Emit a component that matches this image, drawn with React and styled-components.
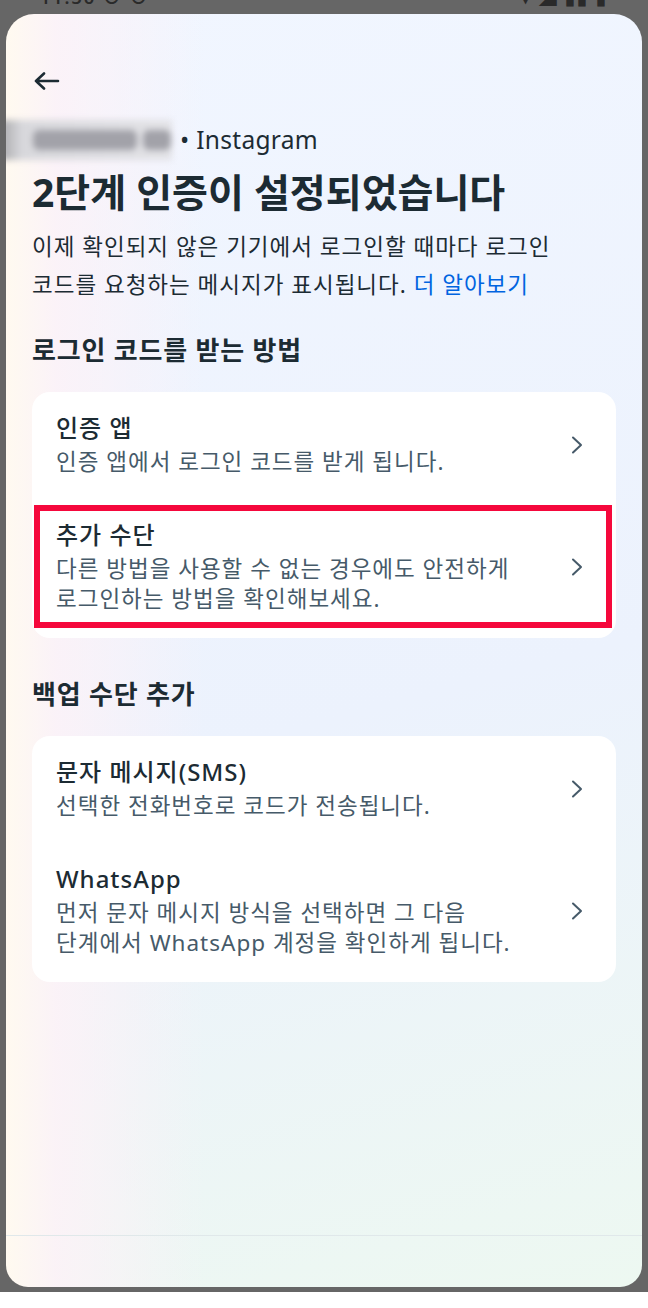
import React from "react";
import styled, { createGlobalStyle } from "styled-components";

const GlobalStyle = createGlobalStyle`
  * {
    box-sizing: border-box;
  }
  body {
    margin: 0;
    background: #666666;
    font-family: "Noto Sans", "Noto Sans CJK KR", sans-serif;
    color: #1c2b33;
  }
`;

const Page = styled.div`
  width: 648px;
  height: 1308px;
  display: flex;
  flex-direction: column;
  background: #666666;
  overflow: hidden;
`;

const StatusBar = styled.div`
  height: 14px;
  flex-shrink: 0;
  display: flex;
  justify-content: space-between;
  padding: 0 40px;
  overflow: hidden;
`;

const StatusText = styled.span`
  margin-top: -14px;
  font-size: 18px;
  line-height: 22px;
  font-weight: 600;
  color: #2a2a2a;
  letter-spacing: 2px;
`;

const Sheet = styled.div`
  height: 1273px;
  margin: 0 6px;
  flex-shrink: 0;
  display: flex;
  flex-direction: column;
  border-radius: 28px 28px 22px 22px;
  overflow: hidden;
  background:
    linear-gradient(90deg, rgba(255, 250, 240, 1) 0px, rgba(253, 242, 247, 0.85) 50px, rgba(240, 244, 255, 0) 200px),
    linear-gradient(165deg, #f1f6ff 0%, #ecf2fd 55%, #edf8f1 100%);
`;

const Content = styled.div`
  flex: 1;
  padding: 58px 26px 0;
`;

const BackButton = styled.button`
  display: block;
  width: 26px;
  height: 18px;
  padding: 0;
  margin-left: 2px;
  border: none;
  background: none;
  color: #1c2b33;
`;

const AccountRow = styled.div`
  display: flex;
  align-items: center;
  height: 40px;
  margin-top: 30px;
`;

const Redaction = styled.span`
  display: flex;
  align-items: center;
  gap: 6px;
  width: 172px;
  height: 40px;
  margin-left: -32px;
  padding-left: 33px;
  background: linear-gradient(90deg, #a9a9ab 0px, #d8d8dc 22px, #e2e2e6 100%);
  filter: blur(3px);
`;

const Blob = styled.span`
  height: 20px;
  width: ${(p) => p.$w}px;
  border-radius: 6px;
  background: #a2a2a9;
`;

const AccountText = styled.span`
  margin-left: 8px;
  font-size: 24.5px;
  line-height: 30px;
  letter-spacing: 0.3px;
  color: #1c2b33;
`;

const Title = styled.h1`
  margin: 8px 0 0;
  font-size: 39px;
  line-height: 48px;
  font-weight: 700;
  color: #1c2b33;
  white-space: nowrap;
`;

const Description = styled.p`
  margin: 12px 0 0;
  font-size: 22.5px;
  line-height: 38px;
  letter-spacing: 1px;
  color: #1c2b33;
  white-space: nowrap;
`;

const Link = styled.a`
  color: #0064e0;
  text-decoration: none;
`;

const Section = styled.section`
  margin-top: ${(p) => p.$top}px;
`;

const SectionTitle = styled.h2`
  margin: 0 0 25px;
  font-size: 26px;
  line-height: 34px;
  font-weight: 700;
  letter-spacing: 0.8px;
  color: #1c2b33;
`;

const Card = styled.div`
  background: #ffffff;
  border-radius: 18px;
  padding-bottom: 2px;
`;

const Item = styled.div`
  position: relative;
  display: flex;
  align-items: center;
  padding: 20px 33px 22px 24px;
`;

const ItemText = styled.div`
  flex: 1;
`;

const ItemTitle = styled.div`
  font-size: 24px;
  line-height: 32px;
  font-weight: 500;
  letter-spacing: 1px;
  color: #1c2b33;
  margin-bottom: 3px;
`;

const ItemSub = styled.div`
  font-size: 22.5px;
  line-height: 30px;
  letter-spacing: 1px;
  color: #465a69;
  white-space: nowrap;
`;

const Chevron = styled.svg`
  width: 12px;
  height: 18px;
  flex-shrink: 0;
  color: #465a69;
`;

const Highlight = styled.div`
  position: absolute;
  top: 6px;
  left: 2px;
  right: 4px;
  bottom: 8px;
  border: 6px solid #f5083c;
  pointer-events: none;
`;

const Footer = styled.div`
  height: 52px;
  flex-shrink: 0;
  border-top: 1px solid #e0e8ea;
`;

const Gap = styled.div`
  height: 5px;
  flex-shrink: 0;
`;

const BottomStrip = styled.div`
  flex: 1;
  background: #ffffff;
`;

const ArrowLeft = () => (
  <svg width="26" height="18" viewBox="0 0 26 18" fill="none">
    <path
      d="M2 9H24M10 1.5L2 9L10 16.5"
      stroke="currentColor"
      strokeWidth="2.6"
      strokeLinecap="round"
      strokeLinejoin="round"
    />
  </svg>
);

const ChevronRight = () => (
  <Chevron viewBox="0 0 12 18" fill="none">
    <path
      d="M2 1.5L10 9L2 16.5"
      stroke="currentColor"
      strokeWidth="2"
      strokeLinecap="round"
      strokeLinejoin="round"
    />
  </Chevron>
);

const OptionItem = ({ title, lines, highlighted }) => (
  <Item>
    <ItemText>
      <ItemTitle>{title}</ItemTitle>
      {lines.map((line) => (
        <ItemSub key={line}>{line}</ItemSub>
      ))}
    </ItemText>
    <ChevronRight />
    {highlighted && <Highlight />}
  </Item>
);

const loginMethods = [
  { title: "인증 앱", lines: ["인증 앱에서 로그인 코드를 받게 됩니다."] },
  {
    title: "추가 수단",
    lines: ["다른 방법을 사용할 수 없는 경우에도 안전하게", "로그인하는 방법을 확인해보세요."],
    highlighted: true,
  },
];

const backupMethods = [
  { title: "문자 메시지(SMS)", lines: ["선택한 전화번호로 코드가 전송됩니다."] },
  {
    title: "WhatsApp",
    lines: ["먼저 문자 메시지 방식을 선택하면 그 다음", "단계에서 WhatsApp 계정을 확인하게 됩니다."],
  },
];

export default function App() {
  return (
    <Page>
      <GlobalStyle />
      <StatusBar>
        <StatusText>11:36 ⊙ ⊙</StatusText>
        <StatusText>▾ ◢ ▮▮ ▮</StatusText>
      </StatusBar>
      <Sheet>
        <Content>
          <BackButton aria-label="뒤로">
            <ArrowLeft />
          </BackButton>
          <AccountRow>
            <Redaction>
              <Blob $w={104} />
              <Blob $w={28} />
            </Redaction>
            <AccountText>• Instagram</AccountText>
          </AccountRow>
          <Title>2단계 인증이 설정되었습니다</Title>
          <Description>
            이제 확인되지 않은 기기에서 로그인할 때마다 로그인
            <br />
            코드를 요청하는 메시지가 표시됩니다. <Link href="#">더 알아보기</Link>
          </Description>
          <Section $top={29}>
            <SectionTitle>로그인 코드를 받는 방법</SectionTitle>
            <Card>
              {loginMethods.map((m) => (
                <OptionItem key={m.title} {...m} />
              ))}
            </Card>
          </Section>
          <Section $top={39}>
            <SectionTitle>백업 수단 추가</SectionTitle>
            <Card>
              {backupMethods.map((m) => (
                <OptionItem key={m.title} {...m} />
              ))}
            </Card>
          </Section>
        </Content>
        <Footer />
      </Sheet>
      <Gap />
      <BottomStrip />
    </Page>
  );
}
